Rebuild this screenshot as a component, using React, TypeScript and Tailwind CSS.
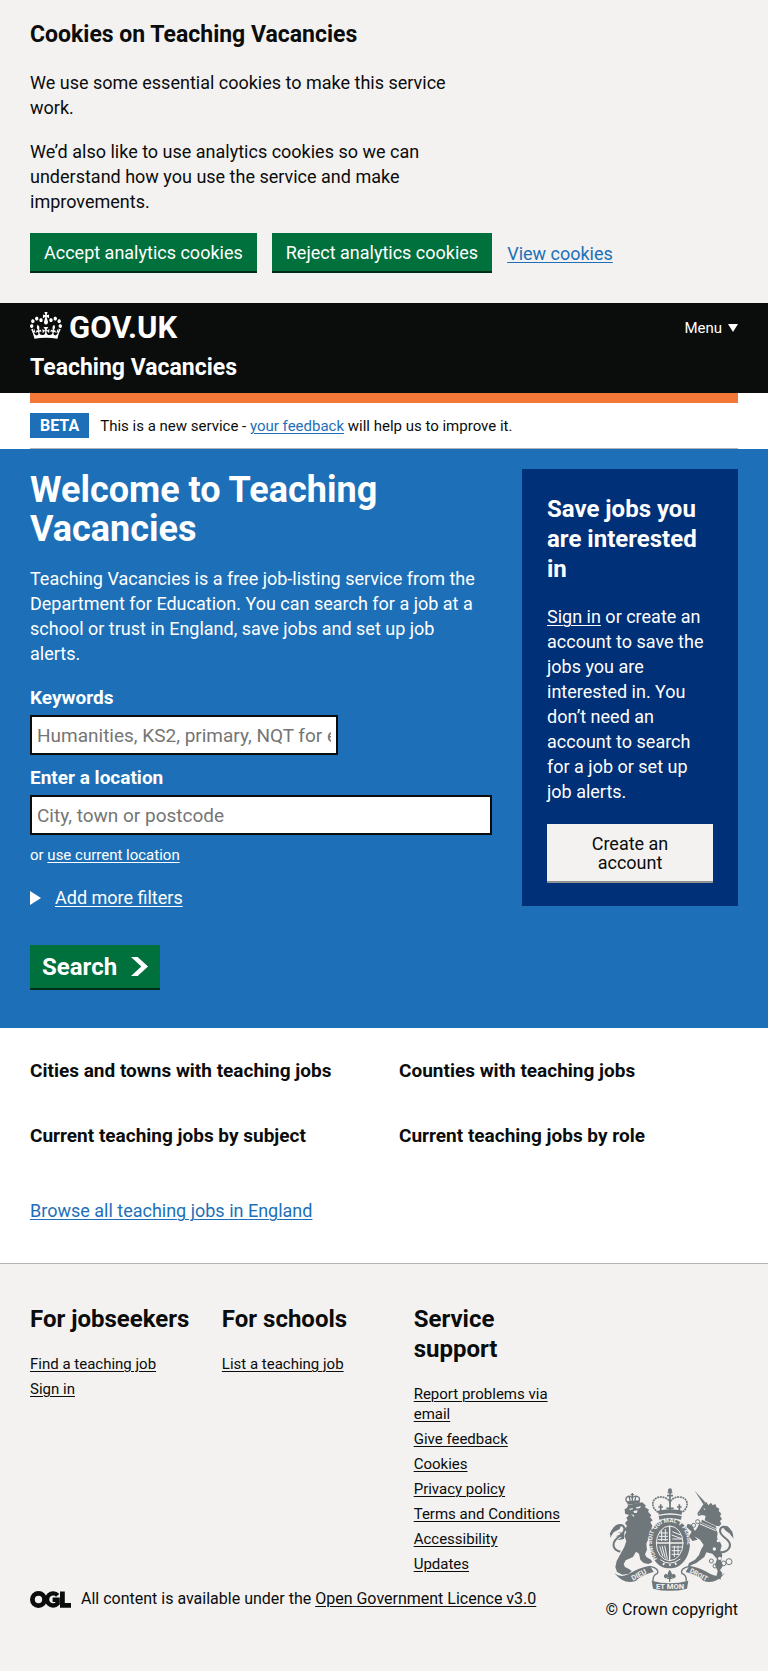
import React from "react";

const jobseekerLinks = ["Find a teaching job", "Sign in"];
const schoolLinks = ["List a teaching job"];
const supportLinks = [
  "Report problems via email",
  "Give feedback",
  "Cookies",
  "Privacy policy",
  "Terms and Conditions",
  "Accessibility",
  "Updates",
];

const underline = "underline decoration-1 underline-offset-2";

function CrownLogo() {
  return (
    <svg
      className="h-[27px] w-8 shrink-0"
      viewBox="0 0 132 97"
      preserveAspectRatio="none"
      fill="currentColor"
      aria-hidden="true"
    >
      <path
        fillRule="evenodd"
        d="M25 30.2c3.5 1.5 7.7-.2 9.1-3.7 1.5-3.6-.2-7.8-3.9-9.2-3.6-1.4-7.6.3-9.1 3.9-1.4 3.5.3 7.5 3.9 9zM9 39.5c3.6 1.5 7.8-.2 9.2-3.7 1.5-3.6-.2-7.8-3.9-9.1-3.6-1.5-7.6.2-9.1 3.8-1.4 3.5.3 7.5 3.8 9zM4.4 57.2c3.5 1.5 7.7-.2 9.1-3.8 1.5-3.6-.2-7.7-3.9-9.1-3.5-1.5-7.6.3-9.1 3.8-1.4 3.5.3 7.6 3.9 9.1zm38.3-21.4c3.5 1.5 7.7-.2 9.1-3.8 1.5-3.6-.2-7.7-3.9-9.1-3.6-1.5-7.6.3-9.1 3.8-1.3 3.6.4 7.7 3.9 9.1zm64.4-5.6c-3.6 1.5-7.8-.2-9.1-3.7-1.5-3.6.2-7.8 3.8-9.2 3.6-1.4 7.7.3 9.2 3.9 1.3 3.5-.4 7.5-3.9 9zm15.9 9.3c-3.6 1.5-7.7-.2-9.1-3.7-1.5-3.6.2-7.8 3.7-9.1 3.6-1.5 7.7.2 9.2 3.8 1.5 3.5-.3 7.5-3.8 9zm4.7 17.7c-3.6 1.5-7.8-.2-9.2-3.8-1.5-3.6.2-7.7 3.9-9.1 3.6-1.5 7.7.3 9.2 3.8 1.3 3.5-.4 7.6-3.9 9.1zM89.3 35.8c-3.6 1.5-7.8-.2-9.2-3.8-1.4-3.6.2-7.7 3.9-9.1 3.6-1.5 7.7.3 9.2 3.8 1.4 3.6-.3 7.7-3.9 9.1zM69.7 17.7l8.9 4.7V9.3l-8.9 2.8c-.2-.3-.5-.6-.9-.9L72.4 0H59.6l3.5 11.2c-.3.3-.6.5-.9.9l-8.8-2.8v13.1l8.8-4.7c.3.3.6.7.9.9l-5 15.4v.1c-.2.8-.4 1.6-.4 2.4 0 4.1 3.1 7.5 7 8.1h.2c.3 0 .7.1 1 .1.4 0 .7 0 1-.1h.2c4-.6 7.1-4.1 7.1-8.1 0-.8-.1-1.7-.4-2.4V34l-5.1-15.4c.4-.2.7-.6 1-.9zM66 92.8c16.9 0 32.8 1.1 47.1 3.2 4-16.9 8.9-26.7 14-33.5l-9.6-3.4c1 4.9 1.1 7.2 0 10.2-1.5-1.4-3-4.3-4.2-8.7L108.6 76c2.8-2 5-3.2 7.5-3.3-4.4 9.4-10 11.9-13.6 11.2-4.3-.8-6.3-4.6-5.6-7.9 1-4.7 5.7-5.9 8-.5 4.3-8.7-3-11.4-7.6-8.8 7.1-7.2 7.9-13.5 2.1-21.1-8 6.1-8.1 12.3-4.5 20.8-4.7-5.4-12.1-2.5-9.5 6.2 3.4-5.2 7.9-2 7.2 3.1-.6 4.3-6.4 7.8-13.5 7.2-10.3-.9-10.9-8-11.2-13.8 2.5-.5 7.1 1.8 11 7.3L80.2 60c-4.1 4.4-8 5.3-12.3 5.4 1.4-4.4 8-11.6 8-11.6H55.5s6.4 7.2 7.9 11.6c-4.2-.1-8-1-12.3-5.4l1.4 16.4c3.9-5.5 8.5-7.7 10.9-7.3-.3 5.8-.9 12.8-11.1 13.8-7.2.6-12.9-2.9-13.5-7.2-.7-5 3.8-8.3 7.1-3.1 2.7-8.7-4.6-11.6-9.4-6.2 3.7-8.5 3.6-14.7-4.6-20.8-5.8 7.6-5 13.9 2.2 21.1-4.7-2.6-11.9.1-7.7 8.8 2.3-5.5 7.1-4.2 8.1.5.7 3.3-1.3 7.1-5.7 7.9-3.5.7-9-1.8-13.5-11.2 2.5.1 4.7 1.3 7.5 3.3l-4.7-15.4c-1.2 4.4-2.7 7.2-4.3 8.7-1.1-3-.9-5.3 0-10.2l-9.5 3.4c5 6.9 9.9 16.7 14 33.5 14.8-2.1 30.8-3.2 47.7-3.2z"
      />
    </svg>
  );
}

function OglLogo() {
  return (
    <svg className="h-[17px] w-[41px] shrink-0" viewBox="0 0 41 17" fill="none" stroke="#0b0c0c" role="img" aria-label="OGL">
      <circle cx="8.5" cy="8.5" r="6.1" strokeWidth="4.8" />
      <path d="M27.7 4.4A6.1 6.1 0 1 0 27.6 12.6V8.8H22.6" strokeWidth="4.4" />
      <path d="M32.4 0.4V14.4H41" strokeWidth="4.8" />
    </svg>
  );
}

function Crest() {
  return (
    <svg className="h-[103px] w-[125px]" viewBox="60 55 375 309" fill="#6f777b" stroke="none" role="img" aria-label="Royal coat of arms">
      {/* lion crown */}
      <g fill="none" stroke="#6f777b" strokeWidth="4">
        <path d="M114 97C105 84 118 74 130 84C142 74 157 82 149 97" />
        <path d="M130 70V96M125 75H135M120 80L124 95M141 79L137 95" />
      </g>
      <path d="M113 95L151 92L152 101L116 105Z" />
      {/* lion */}
      <path d="M118 106L160 98L171 108L167 112L180 120L177 126L187 137L183 142L191 152L184 158L190 168L187 178L197 190L206 196L203 206L190 202L178 208L172 222L174 240L168 254L172 262L186 270L190 278L178 283L164 280L154 270L150 252L141 246L132 262L110 272L104 284L108 292L120 298L128 304L120 312L100 315L84 307L79 292L83 274L96 250L106 232L112 214L106 200L112 186L105 178L114 170L108 160L116 152L112 144L120 136L108 132L107 118L113 116Z" />
      <path d="M120 118L132 115L131 119L123 121ZM141 113L156 110L153 115L143 117ZM133 124L146 122L143 130H136ZM126 133L136 137L134 141Z" fill="#f3f2f1" />
      <path d="M106 190L86 188L98 194L80 200L98 202L85 212L105 208Z" />
      <path d="M94 246C70 240 70 222 80 210C94 196 108 190 106 176C104 163 86 162 75 176L64 195" fill="none" stroke="#6f777b" strokeWidth="6" />
      <path d="M98 163L84 166L66 184L63 205L74 188L92 178Z" />

      {/* centre crown */}
      <g fill="none" stroke="#6f777b" strokeWidth="5">
        <path d="M208 128C182 112 188 82 216 82C230 82 240 90 243 98C246 90 256 82 270 82C298 82 303 112 279 128" strokeDasharray="6 2" />
        <path d="M243 64V126M236 68H250M234 78H252" />
        <path d="M215 124V104M208 112H222M271 124V104M264 112H278M232 116H254" strokeWidth="5" />
      </g>
      <circle cx="243" cy="62" r="6" />
      <path d="M207 123Q243 114 280 123L278 135Q243 126 209 135ZM209 139Q243 131 278 139L276 150Q243 141 211 150Z" />

      {/* garter and quartered shield */}
      <path d="M242 148C284 148 305 184 303 222C301 266 276 296 242 296C208 296 183 266 181 222C179 184 200 148 242 148Z" />
      <g fill="none" stroke="#f3f2f1">
        <path id="garter" d="M205 268C184 236 184 196 205 173C226 153 258 153 279 173C300 196 300 236 279 268" strokeWidth="0" />
        <ellipse cx="242" cy="221" rx="40" ry="52" strokeWidth="3" />
        <path d="M242 168V274M201 220H283" strokeWidth="4" />
        <path d="M211 190H237M209 200H237M207 210H237M250 186L275 196M248 196L280 208M250 208H278M218 182V214M229 178V214" strokeWidth="3" />
        <path d="M212 230L222 260M219 228L229 266M227 228L235 268M248 232H279M248 243H275M248 254H270M256 228V262M267 228V256" strokeWidth="3" />
        <path d="M214 270Q242 292 274 268" strokeWidth="3" />
        <path d="M222 286L226 280M240 286H246M262 285L258 279" strokeWidth="5" />
      </g>
      <text fill="#f3f2f1" fontFamily="Roboto, sans-serif" fontSize="18" fontWeight="700">
        <textPath href="#garter">HONI SOIT QUI MAL Y PENSE</textPath>
      </text>

      {/* unicorn */}
      <path d="M317 63L350 99L343 104Z" />
      <path d="M343 104L352 97L358 107L366 99L370 106L380 104L382 112L391 117L389 124L397 132L393 139L399 148L393 154L397 163L390 170L380 168L364 161L347 152L350 139L340 136L328 139L325 131L334 118Z" />
      <path d="M343 116L350 118L346 121ZM329 131L335 132L331 134Z" fill="#f3f2f1" />
      <path d="M339 150L380 170L383 177L336 158Z" />
      <path d="M333 158L380 178L386 190L384 204L392 214L398 228L394 242L400 256L396 274L402 288L393 302L400 310L394 330L382 322L386 304L378 286L384 268L370 252L352 248L346 262L330 274L322 280L308 286L296 292L300 280L318 270L330 256L336 240L344 226L333 210L316 200L326 210L310 214L300 200L308 186L292 172L296 162L308 166L318 184L324 176Z" />
      <path d="M333 163L380 183" stroke="#f3f2f1" strokeWidth="3" />
      <g fill="none" stroke="#6f777b" strokeWidth="3">
        <circle cx="326" cy="156" r="6" />
        <circle cx="314" cy="167" r="6" />
        <circle cx="367" cy="274" r="6" />
        <circle cx="378" cy="289" r="6" />
        <circle cx="404" cy="281" r="7" />
        <circle cx="420" cy="276" r="9" />
      </g>
      <g fill="#f3f2f1">
        <circle cx="388" cy="213" r="5" />
        <circle cx="376" cy="238" r="5" />
        <circle cx="392" cy="266" r="5" />
      </g>
      <path d="M396 248C420 246 429 228 418 214C408 202 394 198 393 184C393 170 410 166 420 179L430 198" fill="none" stroke="#6f777b" strokeWidth="6" />
      <path d="M400 171L416 170L430 186L434 207L423 192L410 183Z" />

      {/* scrolls */}
      <path d="M76 310Q92 325 118 314Q150 293 183 288L194 307Q160 314 140 334Q105 346 76 310ZM408 310Q392 325 366 314Q334 293 301 288L290 307Q324 314 344 334Q379 346 408 310Z" />
      <path d="M188 333Q242 348 298 333L294 357Q242 370 192 357Z" />
      <path d="M184 290Q212 296 205 312Q192 314 192 334M300 290Q272 296 279 312Q292 314 292 334" fill="none" stroke="#6f777b" strokeWidth="4" />
      <g fill="#f3f2f1" fontFamily="Roboto, sans-serif" fontWeight="700">
        <text fontSize="22" transform="translate(132 333) rotate(-28)">DIEU</text>
        <text fontSize="20" transform="translate(301 307) rotate(29)">DROIT</text>
        <text x="243" y="359" fontSize="23" textAnchor="middle">ET MON</text>
      </g>
      <path d="M242 302Q233 314 240 325H245Q252 314 242 302ZM238 322C232 306 220 318 230 326M246 322C252 306 265 318 255 326" stroke="#6f777b" strokeWidth="3" />
      <path d="M234 326H251M242 326V336" stroke="#6f777b" strokeWidth="4" />
    </svg>
  );
}

function FooterColumn({ title, links }: { title: string; links: string[] }) {
  return (
    <section>
      <h2 className="mb-5 text-[24px] leading-[30px] font-bold">{title}</h2>
      <ul className="flex flex-col gap-[5px] text-[15px]">
        {links.map((link) => (
          <li key={link}>
            <a href="#" className={underline}>{link}</a>
          </li>
        ))}
      </ul>
    </section>
  );
}

export default function App() {
  return (
    <div className="bg-white font-[Roboto,sans-serif] text-[18px] leading-[25px] text-[#0b0c0c]">
      <section aria-label="Cookies on Teaching Vacancies" className="bg-[#f3f2f1] px-[30px] pt-5 pb-[30px]">
        <h2 className="mb-5 text-[23px] leading-[30px] font-bold">Cookies on Teaching Vacancies</h2>
        <div className="max-w-md">
          <p className="mb-[19px]">We use some essential cookies to make this service work.</p>
          <p className="mb-[19px]">
            We’d also like to use analytics cookies so we can understand how you use the service and make improvements.
          </p>
        </div>
        <div className="flex flex-wrap items-center gap-[15px]">
          <button type="button" className="mb-0.5 h-[38px] bg-[#00703c] px-[14px] text-white shadow-[0_2px_0_#002d18]">
            Accept analytics cookies
          </button>
          <button type="button" className="mb-0.5 h-[38px] bg-[#00703c] px-[14px] text-white shadow-[0_2px_0_#002d18]">
            Reject analytics cookies
          </button>
          <a href="#" className={`text-[#1d70b8] ${underline}`}>View cookies</a>
        </div>
      </section>

      <header className="bg-[#0b0c0c] px-[30px] pt-[9px] pb-[10px] text-white">
        <div className="flex items-center justify-between">
          <a href="#" className="flex h-8 items-start gap-[7px]">
            <CrownLogo />
            <span className="text-[31px] leading-8 font-bold">GOV.UK</span>
          </a>
          <button type="button" className="flex items-center gap-1.5 text-[15px] leading-5">
            Menu
            <svg className="h-2 w-2.5" viewBox="0 0 10 8" fill="currentColor" aria-hidden="true">
              <path d="M0 0H10L5 8Z" />
            </svg>
          </button>
        </div>
        <a href="#" className="mt-[9px] block text-[23px] leading-[30px] font-bold">Teaching Vacancies</a>
      </header>

      <div className="mx-[30px]">
        <div className="h-[10px] bg-[#f47738]" />
        <div className="flex items-center gap-[11px] border-b border-[#b1b4b6] py-[10px] text-[15px] leading-5">
          <strong className="bg-[#1d70b8] px-[10px] py-0.5 text-[16px] leading-[21px] font-bold text-white">BETA</strong>
          <p>
            This is a new service -{" "}
            <a href="#" className={`text-[#1d70b8] ${underline}`}>your feedback</a> will help us to improve it.
          </p>
        </div>
      </div>

      <main>
        <div className="grid grid-cols-3 gap-x-[30px] bg-[#1d70b8] px-[30px] pt-5 pb-10 text-white">
          <div className="col-span-2">
            <h1 className="mb-[17px] pt-0.5 text-[36px] leading-[39px] font-bold">Welcome to Teaching Vacancies</h1>
            <p className="mb-[19px] pr-[10px]">
              Teaching Vacancies is a free job-listing service from the Department for Education. You can search for a job at
              a school or trust in England, save jobs and set up job alerts.
            </p>
            <form onSubmit={(event) => event.preventDefault()}>
              <label htmlFor="keyword" className="mb-[5px] block text-[19px] font-bold">Keywords</label>
              <input
                id="keyword"
                type="text"
                placeholder="Humanities, KS2, primary, NQT for example"
                className="block h-10 w-2/3 rounded-none border-2 border-[#0b0c0c] bg-white px-[5px] text-[19px] text-[#0b0c0c] placeholder:text-[#757575] placeholder:opacity-100"
              />
              <label htmlFor="location" className="mt-[10px] mb-[5px] block text-[19px] font-bold">Enter a location</label>
              <input
                id="location"
                type="text"
                placeholder="City, town or postcode"
                className="block h-10 w-full rounded-none border-2 border-[#0b0c0c] bg-white px-[5px] text-[19px] text-[#0b0c0c] placeholder:text-[#757575] placeholder:opacity-100"
              />
              <p className="mt-[10px] text-[15px] leading-5">
                or <a href="#" className={underline}>use current location</a>
              </p>
              <details className="mt-5">
                <summary className="flex items-center gap-[14px]">
                  <svg className="h-[14px] w-[11px]" viewBox="0 0 11 14" fill="currentColor" aria-hidden="true">
                    <path d="M0 0L11 7L0 14Z" />
                  </svg>
                  <span className={underline}>Add more filters</span>
                </summary>
              </details>
              <button
                type="submit"
                className="mt-[35px] flex h-[43px] items-center gap-[14px] bg-[#00703c] px-3 text-[24px] leading-6 font-bold text-white shadow-[0_2px_0_#002d18]"
              >
                Search
                <svg className="h-[19px] w-[17px]" viewBox="0 0 33 40" preserveAspectRatio="none" fill="currentColor" aria-hidden="true">
                  <path d="M0 0h13l20 20-20 20H0l20-20z" />
                </svg>
              </button>
            </form>
          </div>

          <aside className="self-start bg-[#003078] p-[25px]">
            <h2 className="mb-5 text-[24px] leading-[30px] font-bold">Save jobs you are interested in</h2>
            <p className="mb-5">
              <a href="#" className={underline}>Sign in</a> or create an account to save the jobs you are interested in. You
              don’t need an account to search for a job or set up job alerts.
            </p>
            <a
              href="#"
              className="block bg-[#f3f2f1] px-8 pt-[10px] pb-[9px] text-center leading-[19px] text-[#0b0c0c] shadow-[0_2px_0_#929191]"
            >
              Create an account
            </a>
          </aside>
        </div>

        <div className="px-[30px] pt-[30px] pb-10">
          <div className="mb-[50px] grid grid-cols-2 gap-x-[30px] gap-y-10 text-[19px] font-bold">
            <h2>Cities and towns with teaching jobs</h2>
            <h2>Counties with teaching jobs</h2>
            <h2>Current teaching jobs by subject</h2>
            <h2>Current teaching jobs by role</h2>
          </div>
          <a href="#" className={`block text-[#1d70b8] ${underline}`}>Browse all teaching jobs in England</a>
        </div>
      </main>

      <footer className="flex items-end gap-[30px] border-t border-[#b1b4b6] bg-[#f3f2f1] px-[30px] pt-10 pb-[51px] text-[16px] leading-5">
        <div className="flex-1 pb-[11px]">
          <nav aria-label="Footer" className="mb-[15px] grid grid-cols-3 gap-x-[30px]">
            <FooterColumn title="For jobseekers" links={jobseekerLinks} />
            <FooterColumn title="For schools" links={schoolLinks} />
            <FooterColumn title="Service support" links={supportLinks} />
          </nav>
          <div className="flex items-center gap-[10px]">
            <OglLogo />
            <p>
              All content is available under the <a href="#" className={underline}>Open Government Licence v3.0</a>
            </p>
          </div>
        </div>
        <a href="#" className="flex flex-col items-center gap-[9px] whitespace-nowrap">
          <Crest />
          © Crown copyright
        </a>
      </footer>
    </div>
  );
}
